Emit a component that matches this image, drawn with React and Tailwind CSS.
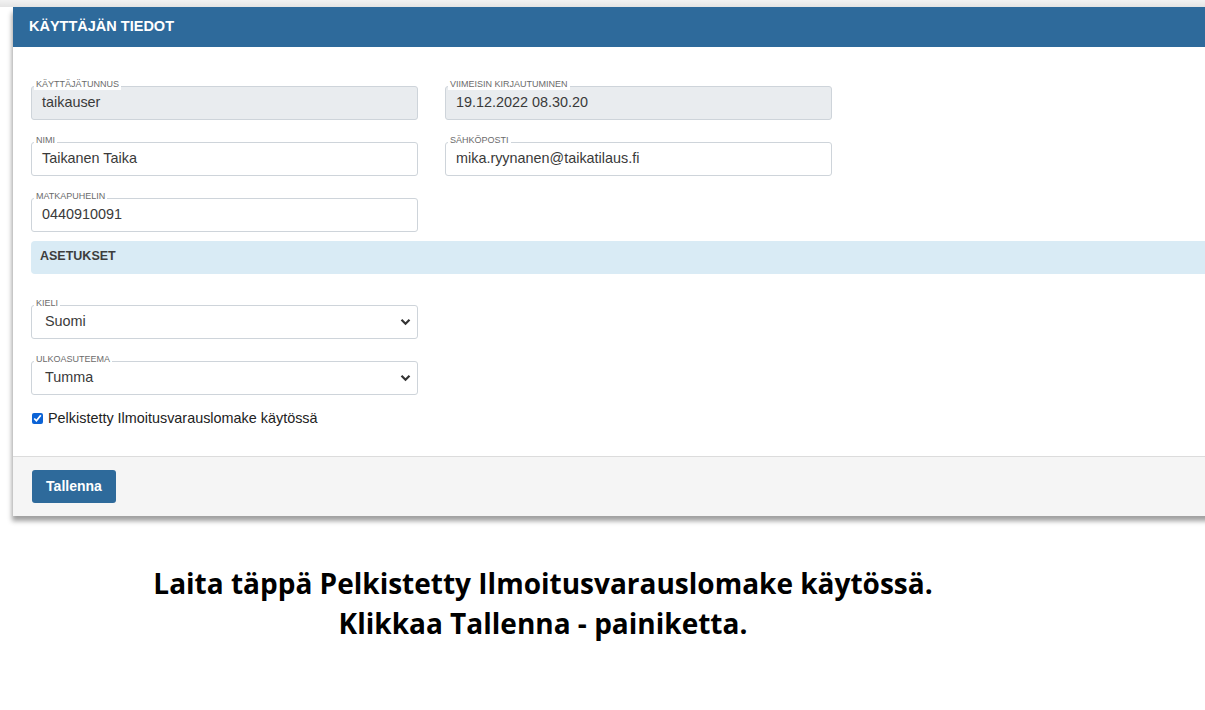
import React from "react";

function Field({ label, value, readOnly, className = "" }) {
  return (
    <div className={`relative w-[387px] ${className}`}>
      <span className="absolute left-[3px] top-[-7px] bg-white px-[2px] text-[9px] leading-[11px] text-[#6b6b6b] uppercase">
        {label}
      </span>
      <div
        className={`h-[34px] rounded-[3px] border border-[#ced4da] pl-[10px] flex items-center text-[14.4px] text-[#3a3a3a] ${
          readOnly ? "bg-[#e9ecef]" : "bg-white"
        }`}
      >
        {value}
      </div>
    </div>
  );
}

function SelectField({ label, value, className = "" }) {
  return (
    <div className={`relative w-[387px] ${className}`}>
      <span className="absolute left-[3px] top-[-7px] bg-white px-[2px] text-[9px] leading-[11px] text-[#6b6b6b] uppercase">
        {label}
      </span>
      <div className="h-[34px] rounded-[3px] border border-[#ced4da] bg-white pl-[13px] pr-[6px] flex items-center justify-between text-[14.4px] text-[#3a3a3a]">
        <span>{value}</span>
        <svg width="11" height="8" viewBox="0 0 11 8">
          <path d="M1.5 1.8 L5.5 5.8 L9.5 1.8" fill="none" stroke="#333" strokeWidth="2.2" />
        </svg>
      </div>
    </div>
  );
}

export default function App() {
  return (
    <div
      className="min-h-screen w-[1205px] overflow-hidden bg-white"
      style={{ fontFamily: '"Liberation Sans", Arial, sans-serif' }}
    >
      {/* top strip */}
      <div className="h-[7px] bg-gradient-to-b from-[#f2f2f2] to-[#e4e4e4]" />

      {/* card */}
      <div className="ml-[13px] w-[1210px] rounded-tl-[3px] shadow-[-1px_5px_5px_rgba(0,0,0,0.38)]">
        <div className="h-[40px] bg-[#2e6a9b] flex items-center pl-[16px] text-[14.5px] font-bold text-white">
          KÄYTTÄJÄN TIEDOT
        </div>

        <div className="bg-white pl-[18px] pt-[39px] pb-[24px]">
          <div className="flex gap-[27px]">
            <Field label="Käyttäjätunnus" value="taikauser" readOnly />
            <Field label="Viimeisin kirjautuminen" value="19.12.2022 08.30.20" readOnly />
          </div>
          <div className="flex gap-[27px] mt-[22px]">
            <Field label="Nimi" value="Taikanen Taika" />
            <Field label="Sähköposti" value="mika.ryynanen@taikatilaus.fi" />
          </div>
          <Field label="Matkapuhelin" value="0440910091" className="mt-[22px]" />

          <div className="mt-[9px] h-[33px] rounded-l-[4px] bg-[#d9ebf5] flex items-center pl-[9px] pb-[2px] text-[12.5px] font-bold text-[#3d3d3d]">
            ASETUKSET
          </div>

          <SelectField label="Kieli" value="Suomi" className="mt-[31px]" />
          <SelectField label="Ulkoasuteema" value="Tumma" className="mt-[22px]" />

          <label className="mt-[13px] mb-[2px] flex items-center gap-[5px] text-[14.4px] text-[#222]">
            <input type="checkbox" defaultChecked className="w-[11px] h-[11px] ml-[1px] accent-[#0b63d6]" />
            Pelkistetty Ilmoitusvarauslomake käytössä
          </label>
        </div>

        <div className="border-t border-[#dcdcdc] bg-[#f5f5f5] h-[60px] pl-[19px] pt-[13px]">
          <button className="h-[33px] w-[84px] rounded-[3px] bg-[#2e6a9b] text-[14px] font-bold text-white">
            Tallenna
          </button>
        </div>
      </div>

      {/* instructions */}
      <div
        className="w-[1086px] pt-[47px] text-center text-[28px] leading-[40px] font-bold text-black"
        style={{ fontFamily: '"Open Sans", Lato, sans-serif' }}
      >
        <p>Laita täppä Pelkistetty Ilmoitusvarauslomake käytössä.</p>
        <p>Klikkaa Tallenna - painiketta.</p>
      </div>
    </div>
  );
}
